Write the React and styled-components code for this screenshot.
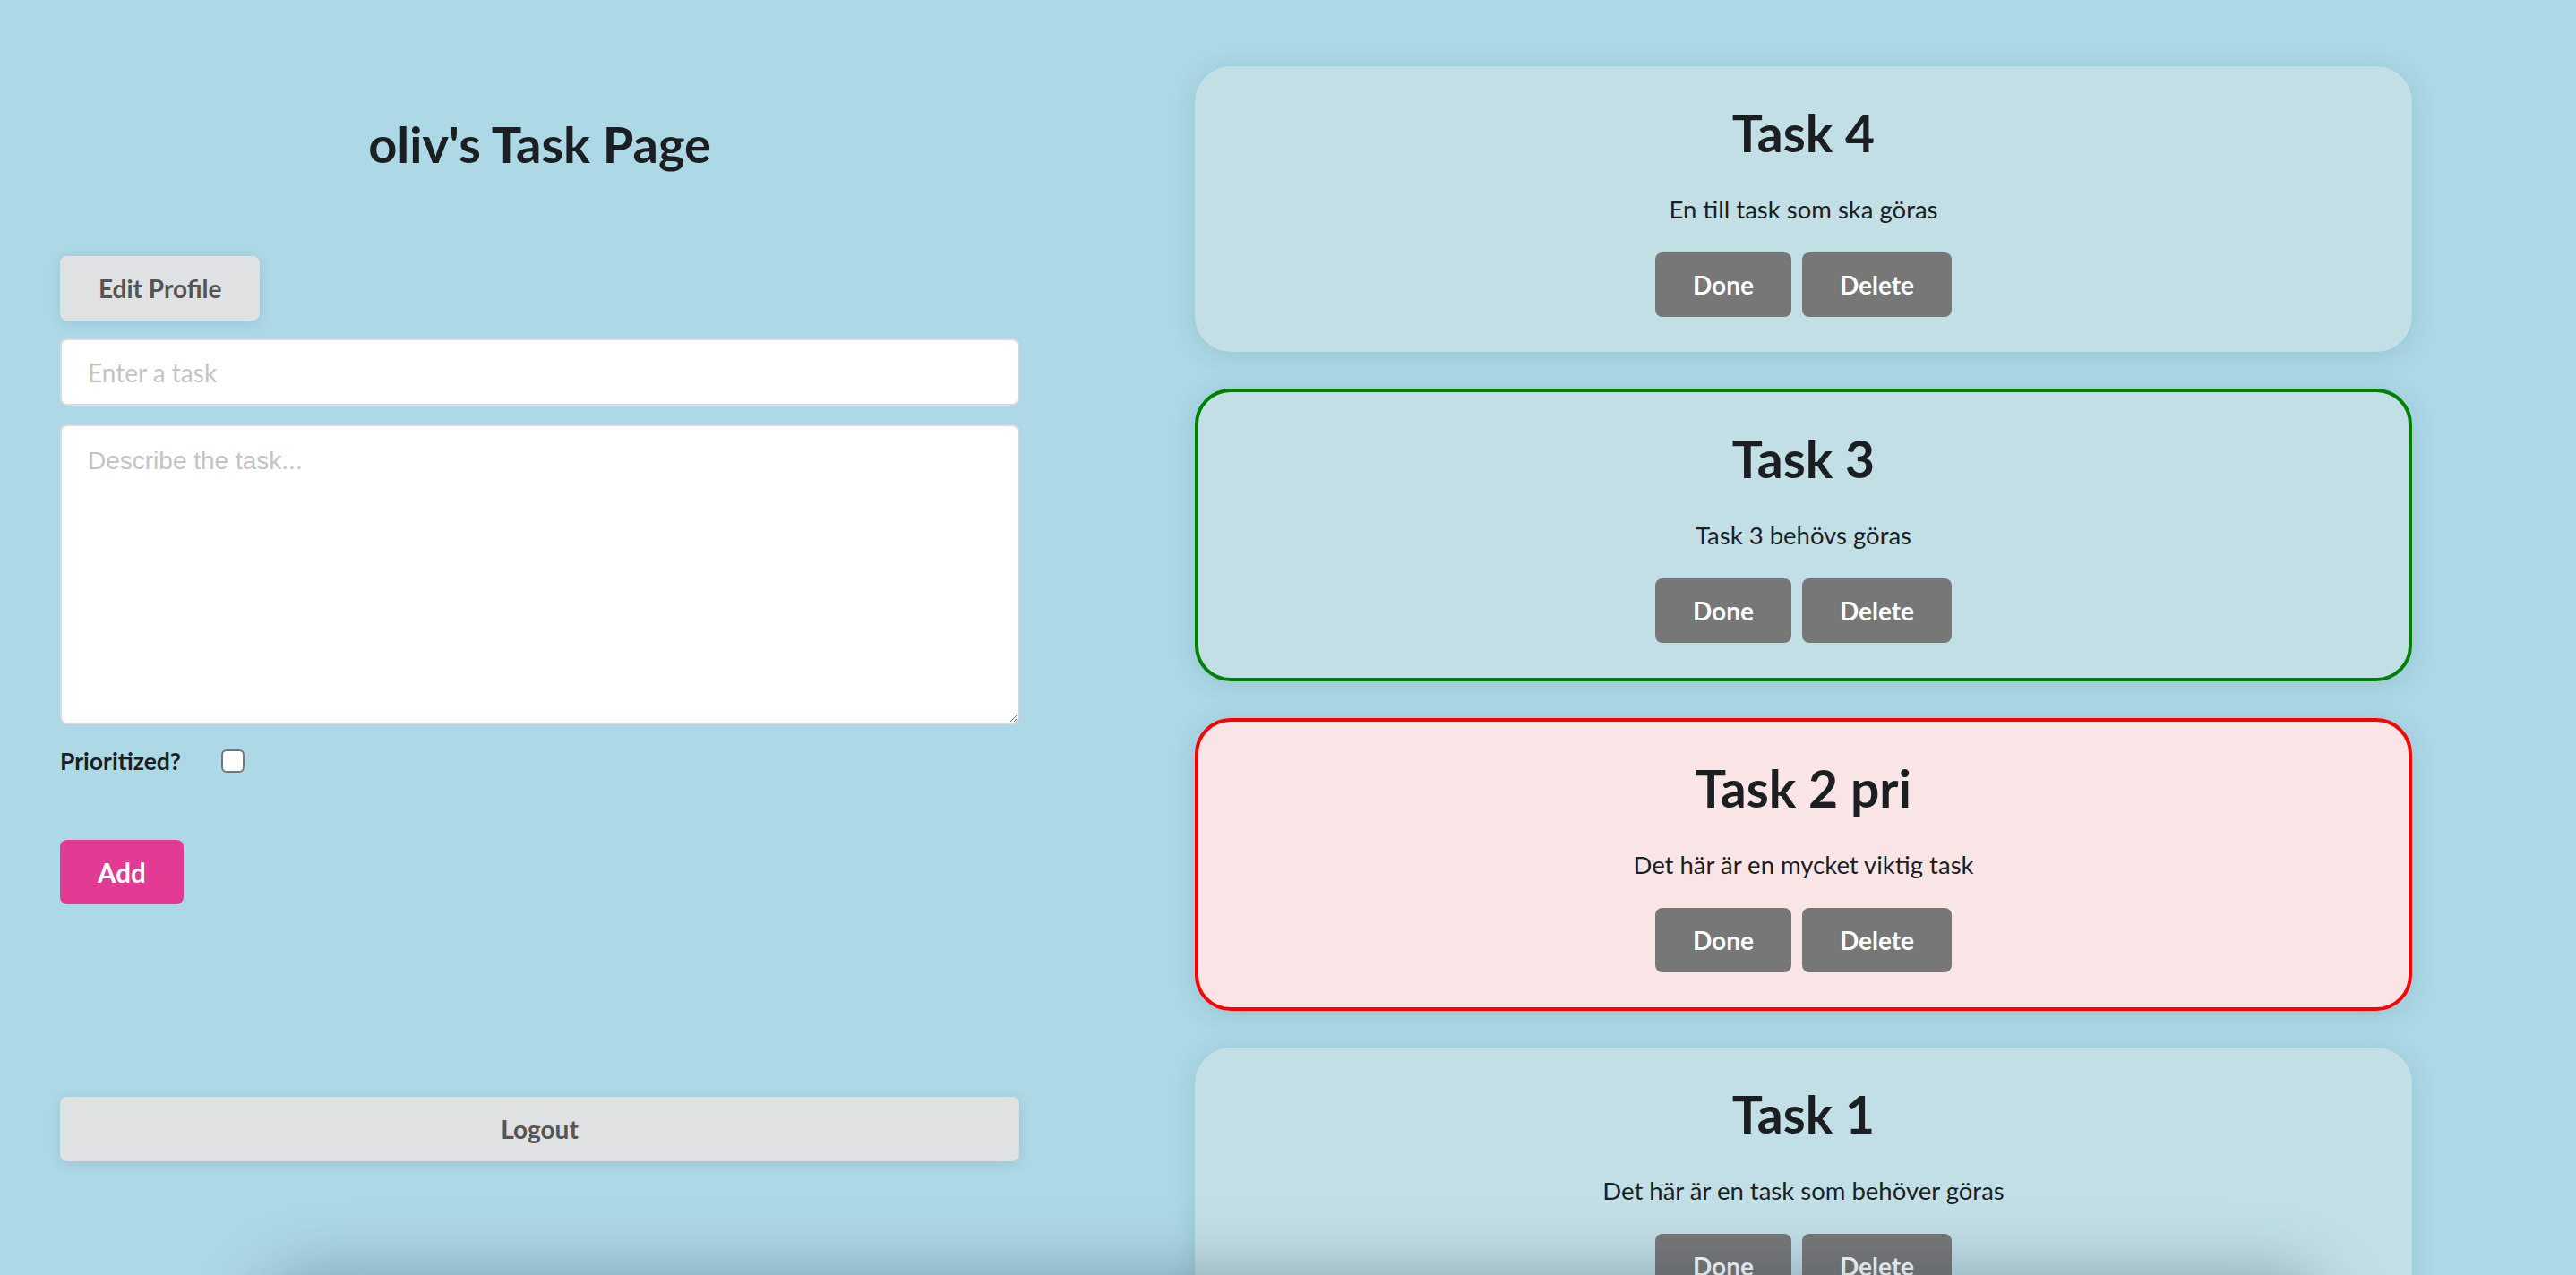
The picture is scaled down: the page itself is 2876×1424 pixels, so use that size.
import React from 'react';
import styled, { createGlobalStyle } from 'styled-components';

const GlobalStyle = createGlobalStyle`
  html, body { margin: 0; padding: 0; }
  body {
    background: #add8e6;
    font-family: Lato, "Noto Sans", sans-serif;
    color: #1b1f21;
    overflow: hidden;
  }
`;

const Page = styled.div`
  display: flex;
  align-items: flex-start;
  gap: 196px;
  padding-left: 67px;
  min-height: 1424px;
  box-sizing: border-box;
`;

const LeftColumn = styled.section`
  width: 1071px;
  flex-shrink: 0;
  display: flex;
  flex-direction: column;
  align-items: flex-start;
`;

const Title = styled.h1`
  align-self: stretch;
  margin: 127px 0 0;
  font-size: 56px;
  line-height: 1.2;
  font-weight: 700;
  text-align: center;
`;

const SoftButton = styled.button`
  height: 72px;
  padding: 0 43px;
  border: none;
  border-radius: 8px;
  background: #e0e1e3;
  color: #555;
  font-family: Lato, sans-serif;
  font-weight: 700;
  font-size: 28px;
  box-shadow: 0 3px 14px rgba(40, 90, 110, 0.14);
  margin-top: ${(p) => p.$mt || 0}px;
  align-self: ${(p) => (p.$full ? 'stretch' : 'flex-start')};
  cursor: pointer;
`;

const TextInput = styled.input`
  align-self: stretch;
  box-sizing: border-box;
  height: 75px;
  margin-top: 20px;
  padding: 0 29px;
  border: 2px solid #dadada;
  border-radius: 8px;
  background: #fff;
  font-family: Lato, sans-serif;
  font-size: 28px;
  outline: none;
  &::placeholder { color: #c4c4c4; }
`;

const TextArea = styled.textarea`
  align-self: stretch;
  box-sizing: border-box;
  height: 335px;
  margin-top: 21px;
  padding: 23px 29px;
  border: 2px solid #dadada;
  border-radius: 8px;
  background: #fff;
  font-family: "Liberation Sans", Arial, sans-serif;
  font-size: 28px;
  outline: none;
  resize: both;
  &::placeholder { color: #c4c4c4; }
`;

const CheckRow = styled.label`
  display: flex;
  align-items: center;
  gap: 45px;
  margin-top: 25px;
  height: 32px;
  font-size: 26.5px;
  font-weight: 700;
  color: #1b1f21;
`;

const CheckBox = styled.input`
  appearance: none;
  width: 26px;
  height: 26px;
  margin: 0;
  border: 2px solid #767676;
  border-radius: 6px;
  background: #fff;
  box-sizing: border-box;
`;

const AddButton = styled.button`
  height: 72px;
  margin-top: 72px;
  padding: 0 42px;
  border: none;
  border-radius: 8px;
  background: #e33b94;
  color: #fff;
  font-family: Lato, sans-serif;
  font-weight: 700;
  font-size: 29.5px;
  cursor: pointer;
`;

const RightColumn = styled.section`
  width: 1359px;
  flex-shrink: 0;
  padding-top: 74px;
  display: flex;
  flex-direction: column;
  gap: 41px;
`;

const Card = styled.article`
  box-sizing: border-box;
  width: 100%;
  padding: 39px 40px;
  border-radius: 40px;
  border: ${(p) => (p.$tone === 'done' ? '4px solid #008000' : p.$tone === 'pri' ? '4px solid #ff0000' : 'none')};
  background: ${(p) => (p.$tone === 'pri' ? '#fae5e6' : '#c2dfe6')};
  box-shadow: 0 4px 28px rgba(40, 100, 125, 0.16);
  display: flex;
  flex-direction: column;
  align-items: center;
  text-align: center;
`;

const CardTitle = styled.h2`
  margin: 0;
  font-size: 57px;
  line-height: 70px;
  font-weight: 700;
  color: #1b1f21;
`;

const CardText = styled.p`
  margin: 35px 0 0;
  font-size: 27.5px;
  line-height: 32px;
  color: #1b1f21;
`;

const Actions = styled.div`
  display: flex;
  gap: 12px;
  margin-top: 32px;
`;

const ActionButton = styled.button`
  height: 72px;
  padding: 0 42px;
  border: none;
  border-radius: 8px;
  background: #777;
  color: #fff;
  font-family: Lato, sans-serif;
  font-weight: 700;
  font-size: 28px;
  cursor: pointer;
`;

const BottomShade = styled.div`
  position: fixed;
  left: 300px;
  right: 290px;
  top: 1440px;
  height: 200px;
  border-radius: 60px;
  background: #8fb4c0;
  box-shadow: 0 0 70px 20px rgba(40, 70, 85, 0.35);
  pointer-events: none;
`;

const tasks = [
  { id: 4, title: 'Task 4', text: 'En till task som ska göras', tone: 'plain' },
  { id: 3, title: 'Task 3', text: 'Task 3 behövs göras', tone: 'done' },
  { id: 2, title: 'Task 2 pri', text: 'Det här är en mycket viktig task', tone: 'pri' },
  { id: 1, title: 'Task 1', text: 'Det här är en task som behöver göras', tone: 'plain' },
];

export default function App() {
  return (
    <>
      <GlobalStyle />
      <Page>
        <LeftColumn>
          <Title>oliv's Task Page</Title>
          <SoftButton $mt={92}>Edit Profile</SoftButton>
          <TextInput placeholder="Enter a task" />
          <TextArea placeholder="Describe the task..." />
          <CheckRow>
            Prioritized?
            <CheckBox type="checkbox" />
          </CheckRow>
          <AddButton>Add</AddButton>
          <SoftButton $mt={215} $full>Logout</SoftButton>
        </LeftColumn>
        <RightColumn>
          {tasks.map((t) => (
            <Card key={t.id} $tone={t.tone}>
              <CardTitle>{t.title}</CardTitle>
              <CardText>{t.text}</CardText>
              <Actions>
                <ActionButton>Done</ActionButton>
                <ActionButton>Delete</ActionButton>
              </Actions>
            </Card>
          ))}
        </RightColumn>
      </Page>
      <BottomShade />
    </>
  );
}
